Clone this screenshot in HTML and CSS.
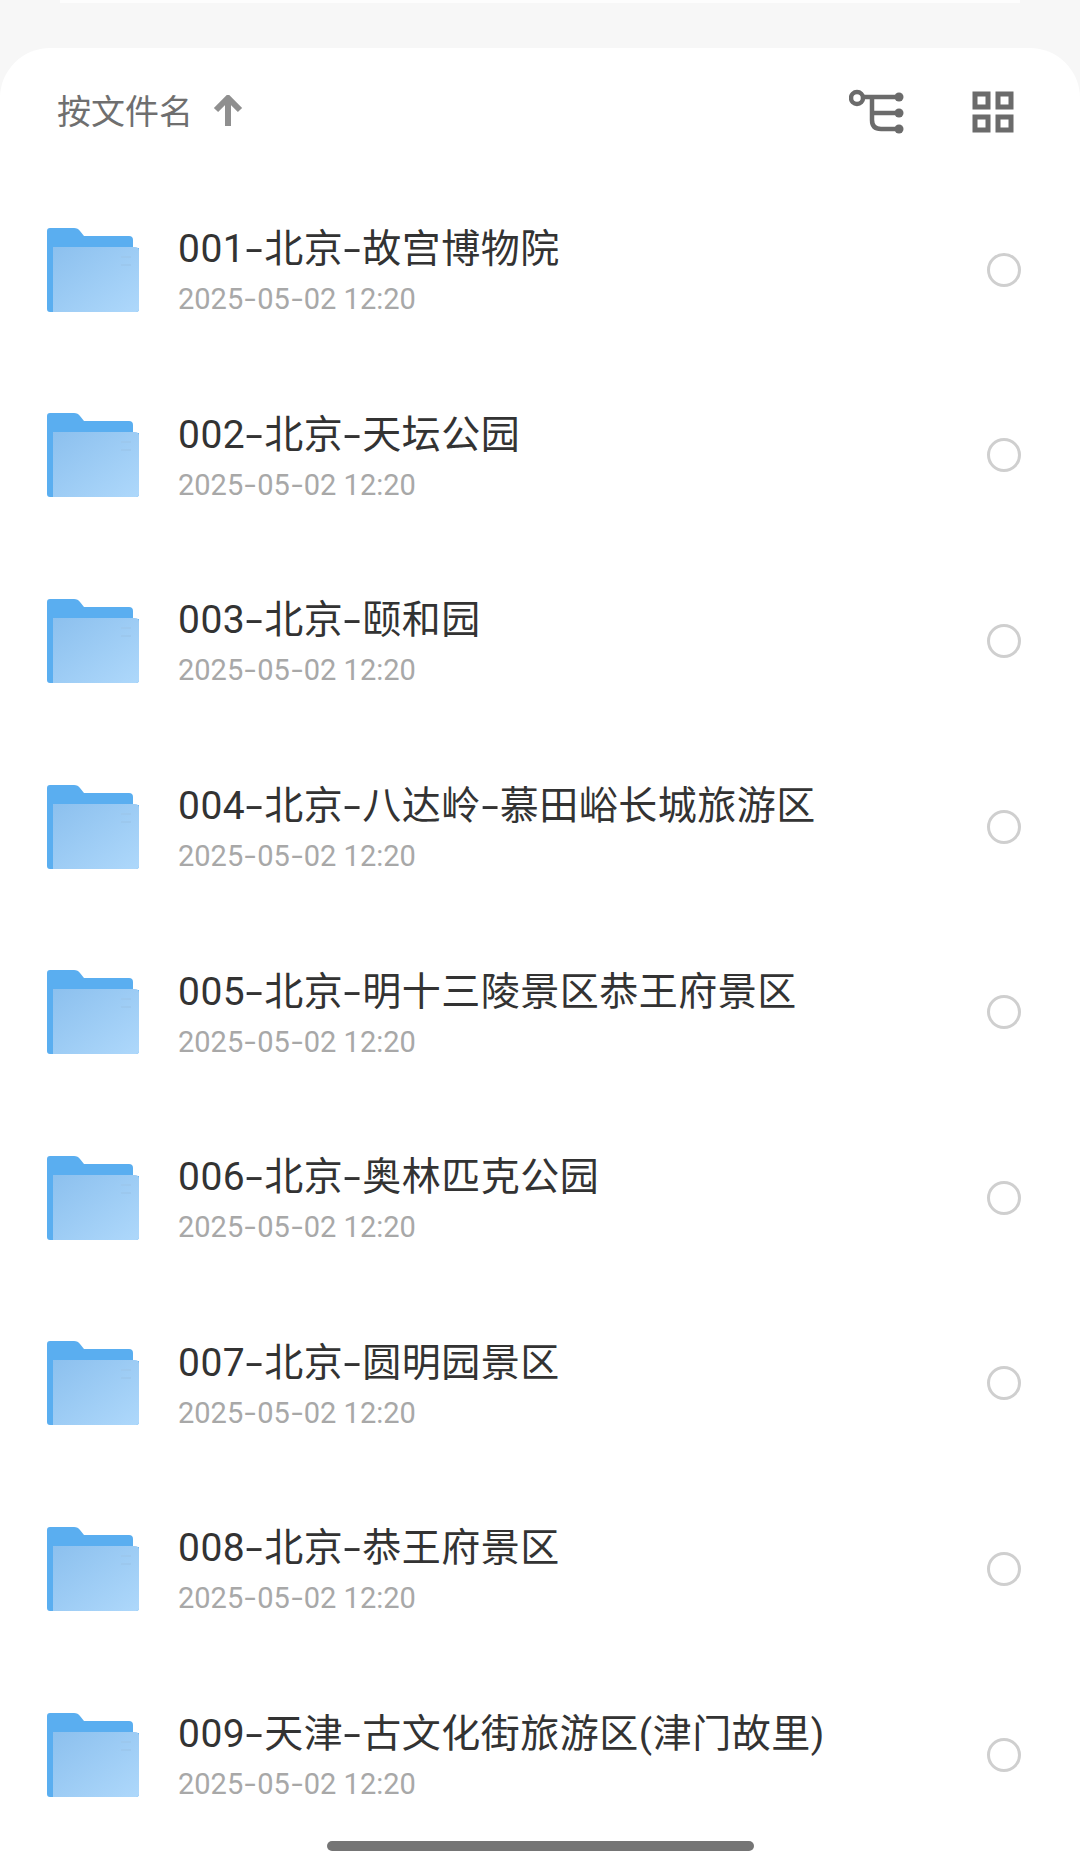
FILE: index.html
```html
<!DOCTYPE html>
<html lang="zh-CN">
<head>
  <meta charset="UTF-8">
  <title>文件列表</title>
  <link rel="stylesheet" href="styles.css">
</head>
<body>
  <svg class="defs" width="0" height="0">
    <defs>
      <linearGradient id="folderFront" x1="0" y1="0" x2="1" y2="1">
        <stop offset="0" stop-color="#8cc0ee"/>
        <stop offset="1" stop-color="#aed8fb"/>
      </linearGradient>
      <symbol id="folder" viewBox="0 0 92 84">
        <path d="M3 0H27Q31 0 33 3L37 8H82Q86 8 86 12V20H92V81Q92 84 89 84H3Q0 84 0 81V3Q0 0 3 0Z" fill="#5aaef0"/>
        <path d="M6 19H88Q92 19 92 23V81Q92 84 89 84H6Z" fill="url(#folderFront)"/>
        <path d="M74 29H84M74 37H84" stroke="#9cc8ee" stroke-width="2"/>
      </symbol>
    </defs>
  </svg>
  <div class="topstrip"></div>
  <div class="sheet">
    <div class="toolbar">
      <div class="sort">
        <span>按文件名</span>
        <svg class="arrow" width="30" height="32" viewBox="0 0 30 32">
          <path d="M15 31V5M3 15L15 3L27 15" fill="none" stroke="#8f8f8f" stroke-width="6"/>
        </svg>
      </div>
      <div class="tools">
        <svg width="56" height="46" viewBox="0 0 56 46">
          <circle cx="8" cy="9" r="6" fill="none" stroke="#6b6b6b" stroke-width="4.5"/>
          <path d="M14 8H49M23 8V31Q23 40 32 40H49M23 24H49" fill="none" stroke="#6b6b6b" stroke-width="4.5"/>
          <circle cx="50" cy="8" r="4.5" fill="#6b6b6b"/>
          <circle cx="50" cy="24" r="4.5" fill="#6b6b6b"/>
          <circle cx="50" cy="40" r="4.5" fill="#6b6b6b"/>
        </svg>
        <svg width="42" height="42" viewBox="0 0 42 42">
          <g fill="none" stroke="#6b6b6b" stroke-width="5">
            <rect x="3" y="3" width="13" height="13"/>
            <rect x="26" y="3" width="13" height="13"/>
            <rect x="3" y="26" width="13" height="13"/>
            <rect x="26" y="26" width="13" height="13"/>
          </g>
        </svg>
      </div>
    </div>
    <ul class="files">
      <li class="file">
        <svg class="folder"><use href="#folder"/></svg>
        <div class="info"><div class="name">001<i>-</i>北京<i>-</i>故宫博物院</div><div class="date">2025<i>-</i>05<i>-</i>02 12:20</div></div>
        <span class="radio"></span>
      </li>
      <li class="file">
        <svg class="folder"><use href="#folder"/></svg>
        <div class="info"><div class="name">002<i>-</i>北京<i>-</i>天坛公园</div><div class="date">2025<i>-</i>05<i>-</i>02 12:20</div></div>
        <span class="radio"></span>
      </li>
      <li class="file">
        <svg class="folder"><use href="#folder"/></svg>
        <div class="info"><div class="name">003<i>-</i>北京<i>-</i>颐和园</div><div class="date">2025<i>-</i>05<i>-</i>02 12:20</div></div>
        <span class="radio"></span>
      </li>
      <li class="file">
        <svg class="folder"><use href="#folder"/></svg>
        <div class="info"><div class="name">004<i>-</i>北京<i>-</i>八达岭<i>-</i>慕田峪长城旅游区</div><div class="date">2025<i>-</i>05<i>-</i>02 12:20</div></div>
        <span class="radio"></span>
      </li>
      <li class="file">
        <svg class="folder"><use href="#folder"/></svg>
        <div class="info"><div class="name">005<i>-</i>北京<i>-</i>明十三陵景区恭王府景区</div><div class="date">2025<i>-</i>05<i>-</i>02 12:20</div></div>
        <span class="radio"></span>
      </li>
      <li class="file">
        <svg class="folder"><use href="#folder"/></svg>
        <div class="info"><div class="name">006<i>-</i>北京<i>-</i>奥林匹克公园</div><div class="date">2025<i>-</i>05<i>-</i>02 12:20</div></div>
        <span class="radio"></span>
      </li>
      <li class="file">
        <svg class="folder"><use href="#folder"/></svg>
        <div class="info"><div class="name">007<i>-</i>北京<i>-</i>圆明园景区</div><div class="date">2025<i>-</i>05<i>-</i>02 12:20</div></div>
        <span class="radio"></span>
      </li>
      <li class="file">
        <svg class="folder"><use href="#folder"/></svg>
        <div class="info"><div class="name">008<i>-</i>北京<i>-</i>恭王府景区</div><div class="date">2025<i>-</i>05<i>-</i>02 12:20</div></div>
        <span class="radio"></span>
      </li>
      <li class="file">
        <svg class="folder"><use href="#folder"/></svg>
        <div class="info"><div class="name">009<i>-</i>天津<i>-</i>古文化街旅游区(津门故里)</div><div class="date">2025<i>-</i>05<i>-</i>02 12:20</div></div>
        <span class="radio"></span>
      </li>
    </ul>
    <div class="homebar"></div>
  </div>
</body>
</html>
```

FILE: styles.css
```css
* { box-sizing: border-box; }
html, body { margin: 0; padding: 0; }
body { width: 1080px; height: 1865px; overflow: hidden; background: #f7f7f7; font-family: Roboto, "Noto Sans CJK SC", sans-serif; }
.defs { display: block; height: 0; }
.topstrip { height: 3px; margin: 0 60px 45px; background: #fdfdfd; }
.sheet { height: 1817px; background: #fff; border-radius: 50px 50px 0 0; }
.toolbar { height: 129px; padding: 0 66px 2px 57px; display: flex; align-items: center; justify-content: space-between; }
.sort { display: flex; align-items: center; gap: 20px; margin-bottom: 5px; font-size: 34px; color: #6f6f6f; }
.arrow { margin-top: 3px; }
.tools { display: flex; align-items: center; gap: 67px; }
.files { list-style: none; margin: 0; padding: 0; }
.file { height: 185.6px; padding: 0 59px 0 47px; display: flex; align-items: center; }
.folder { width: 92px; height: 84px; flex: none; }
.info { flex: 1; margin-left: 39px; padding-top: 4px; }
.name { font-size: 39px; line-height: 50px; letter-spacing: 0.5px; color: #333; }
.date { font-size: 29px; line-height: 40px; margin-top: 5px; color: #a8a8a8; }
/* the hyphens in the screenshot are much wider than Roboto's */
.name i, .date i { display: inline-block; font-style: normal; text-align: center; }
.name i { width: 19px; transform: scaleX(1.6); }
.date i { width: 14px; transform: scaleX(1.4); }
.radio { width: 34px; height: 34px; flex: none; border: 3px solid #cfcfcf; border-radius: 50%; }
.homebar { width: 427px; height: 10px; margin: -6px 0 0 327px; background: #757575; border-radius: 5px; }
```
